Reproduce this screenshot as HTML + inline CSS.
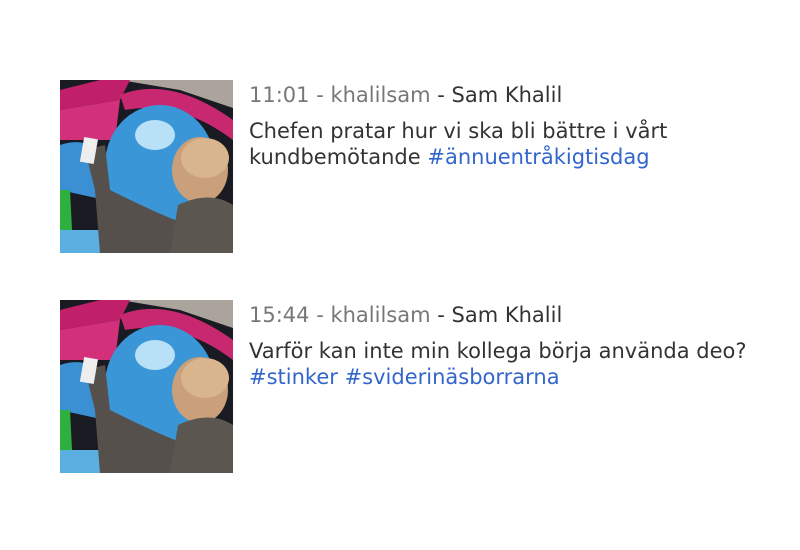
<!DOCTYPE html>
<html><head><meta charset="utf-8"><style>
body{margin:0;width:800px;height:550px;background:#fff;font-family:"DejaVu Sans",Verdana,sans-serif;position:relative;overflow:hidden}
.t{position:absolute;left:60px}
.img{position:absolute;left:0;top:0;width:173px;height:173px}
.txt{position:absolute;left:189px;top:0;width:600px;font-size:21px;color:#333;white-space:nowrap}
.h{line-height:30px;margin-top:0}
.g{color:#777}
.b{line-height:26px;margin-top:8px}
a{color:#3366cc;text-decoration:none}
</style></head><body>
<svg width="0" height="0" style="position:absolute"><defs>
<g id="pic">
<rect width="173" height="173" fill="#1a1a22"/>
<polygon points="0,0 173,0 173,28 120,10 60,0" fill="#aaa49c"/>
<path d="M0,10 L40,0 L70,0 L60,20 L30,25 L0,30Z" fill="#c0206a"/>
<path d="M0,30 L30,25 L60,20 L55,60 L0,60Z" fill="#d2307a"/>
<path d="M60,15 Q110,-5 173,40 L173,60 Q120,20 65,30Z" fill="#c8286f"/>
<ellipse cx="100" cy="85" rx="55" ry="60" fill="#3a96d6"/>
<ellipse cx="95" cy="55" rx="20" ry="15" fill="#b8e0f6"/>
<path d="M0,65 Q30,55 45,80 L45,120 L0,110Z" fill="#3a90d2"/>
<path d="M0,110 L10,110 L12,150 L0,150Z" fill="#2db040"/>
<path d="M0,150 L40,150 L45,173 L0,173Z" fill="#5aaee0"/>
<path d="M25,70 L45,65 L50,110 Q90,130 115,140 L173,130 L173,173 L40,173 L35,110Z" fill="#56504c"/>
<ellipse cx="140" cy="90" rx="28" ry="33" fill="#c9a07a"/>
<ellipse cx="145" cy="78" rx="24" ry="20" fill="#d8b58c"/>
<path d="M118,125 Q150,110 173,125 L173,173 L110,173Z" fill="#5c5650"/>
<rect x="22" y="58" width="14" height="25" fill="#eee" transform="rotate(10 29 70)"/>
</g></defs></svg>
<div class="t" style="top:80px">
<svg class="img" viewBox="0 0 173 173"><use href="#pic"/></svg>
<div class="txt"><div class="h"><span class="g">11:01 - khalilsam</span> - Sam Khalil</div>
<div class="b">Chefen pratar hur vi ska bli bättre i vårt<br>kundbemötande <a>#ännuentråkigtisdag</a></div></div>
</div>
<div class="t" style="top:300px">
<svg class="img" viewBox="0 0 173 173"><use href="#pic"/></svg>
<div class="txt"><div class="h"><span class="g">15:44 - khalilsam</span> - Sam Khalil</div>
<div class="b">Varför kan inte min kollega börja använda deo?<br><a>#stinker</a> <a>#sviderinäsborrarna</a></div></div>
</div>
</body></html>
